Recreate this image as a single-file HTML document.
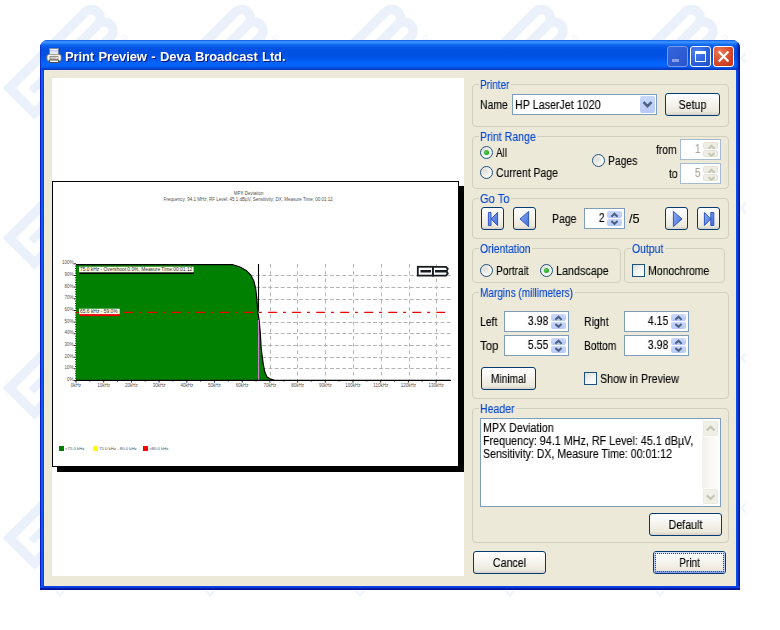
<!DOCTYPE html>
<html><head><meta charset="utf-8"><title>Print Preview - Deva Broadcast Ltd.</title>
<style>
html,body{margin:0;padding:0;background:#fff;}
body{width:780px;height:630px;position:relative;overflow:hidden;font-family:"Liberation Sans",sans-serif;font-size:11px;color:#000;}
#win *,#bg *{position:absolute;box-sizing:border-box;}
#bg{position:absolute;left:0;top:0;width:780px;height:630px;}
#win{position:absolute;left:40px;top:40px;width:700px;height:550px;background:#0831d9;border-radius:8px 8px 0 0;overflow:hidden;}
#pg{left:-40px;top:-40px;width:780px;height:630px;}
#tbar{left:0;top:0;width:700px;height:30px;background:linear-gradient(180deg,#0a4fdc 0%,#2f86fb 4%,#3a90ff 8%,#1f76f8 13%,#0a62ee 18%,#0356e6 25%,#0050e0 35%,#0052e4 56%,#0058ee 64%,#0463fa 74%,#0566fb 84%,#0458ea 91%,#0244d2 95%,#0036c0 100%);}
#frame{left:0;top:30px;width:700px;height:520px;background:linear-gradient(90deg,#0019cf 0,#0019cf 1px,#1a62f0 1px,#0f52e8 3px,#0a44de 3px,#0a44de 4px,#0a4be6 696px,#0a4be6 698px,#0a2cc0 698.5px,#0019a8 699px,#0019a8 700px);}
#fbot{left:0;top:546px;width:700px;height:4px;background:linear-gradient(180deg,#0c46e6 0,#0a3cdc 2px,#001aa8 2.5px,#00138c 4px);}
#client{left:4px;top:30px;width:692px;height:516px;background:#ece9d8;}
#ttext{left:65px;top:49px;word-spacing:1px;letter-spacing:-0.12px;font-weight:bold;font-size:13px;color:#fff;white-space:nowrap;text-shadow:1px 1px 0 #0a1883;line-height:16px;}
.t,.gl,.bt,#ttext{will-change:transform;}
.t,.gl,.bt{-webkit-text-stroke:0.12px currentColor;}
.t{white-space:nowrap;line-height:13px;height:13px;font-size:12px;transform-origin:0 0;}
.grp{border:1px solid #d0d0bf;border-radius:4px;}
.gl{color:#0046d5;white-space:nowrap;line-height:13px;height:13px;font-size:12px;transform-origin:0 0;}
.glb{background:#ece9d8;}
.bt{left:0;top:1px;width:100%;height:100%;font-size:12px;text-align:center;line-height:21px;white-space:nowrap;transform-origin:50% 0;}
.btn{border:1px solid #003c74;border-radius:3px;background:linear-gradient(180deg,#ffffff 0%,#f6f5f0 40%,#ece9dd 85%,#d6d0c5 100%);text-align:center;line-height:21px;white-space:nowrap;}
.ring1{border:1px solid #b9cdf6;border-top-color:#cfe0fc;border-bottom-color:#7f9ee9;border-radius:2px;}
.ring2{border:1px solid #c3d4f8;border-top-color:#dbe7fd;border-bottom-color:#9bb5f0;}
.focus{border:1px dotted #5e4420;}
.edit{background:#fff;border:1px solid #7f9db9;}
.radio{width:13px;height:13px;border-radius:50%;border:1px solid #1c5180;background:radial-gradient(circle at 35% 35%,#dcdcd7 0%,#f3f3ef 50%,#ffffff 100%);}
.radio.on::after{content:"";position:absolute;left:3px;top:3px;width:5px;height:5px;border-radius:50%;background:radial-gradient(circle at 40% 40%,#55d551,#21a121 70%);}
.chk{width:13px;height:13px;border:1px solid #1c5180;background:linear-gradient(135deg,#dcdcd7 0%,#f3f3ef 50%,#ffffff 100%);}
.sb{width:15px;height:7px;background:linear-gradient(180deg,#c9d8fc,#b7c9f7);border-radius:2px;}
.sb.dis{background:#f0eee4;border:1px solid #e4e2d6}
.sb svg{left:0;top:0}
.cbtn{background:linear-gradient(180deg,#c9d8fc,#b7c9f7);border-radius:2px;}
.sbar{background:linear-gradient(90deg,#f3f1ec,#fefefb);}
.sbtn{background:#f1f0e8;border:1px solid #fdfdfa;border-radius:3px;box-shadow:inset 0 0 0 1px #eceade;}
.tb{width:21px;height:21px;border:1px solid #fff;border-radius:3px;}
.tmin{background:linear-gradient(135deg,#3565da,#2a55cf);border-color:#7c9be6;}
.tmax{background:radial-gradient(circle at 30% 25%,#4f82f0 0%,#2c5fdc 60%,#1f4cc8 100%);}
.tcls{background:radial-gradient(circle at 30% 25%,#ea7a55 0%,#d9482a 55%,#bf3417 100%);}

</style></head><body>
<svg width="0" height="0" style="position:absolute"><defs>
<linearGradient id="ng" x1="0" y1="0" x2="1" y2="1"><stop offset="0" stop-color="#8fb0f2"/><stop offset="1" stop-color="#3f6ad6"/></linearGradient>
</defs></svg>
<div id="bg">
<svg width="780" height="630" viewBox="0 0 780 630" style="left:0;top:0">
<defs><pattern id="wm" width="150" height="150" patternUnits="userSpaceOnUse">
<g transform="translate(2.700 88) rotate(-45)" fill="none" stroke="#ebf1fb" stroke-width="9.500" stroke-linejoin="miter">
<rect x="4.750" y="4.750" width="50" height="35.500"/>
<path d="M18 22.500H42" stroke-width="8"/>
<path d="M54.750 4.750H112a8.875 8.875 0 0 1 0 17.750a8.875 8.875 0 0 1 0 17.750H54.750"/>
<path d="M59 22.500H112"/>
<circle cx="122" cy="51" r="2.500" stroke-width="0.800"/>
</g>
<path d="M56 141L60 145.500L64 141M145.500 53.500L141.500 58L145.500 62.500" fill="none" stroke="#eef3fc" stroke-width="2.200"/>
</pattern></defs>
<rect x="0" y="0" width="750" height="600" fill="url(#wm)"/>
</svg>

</div>
<div id="win">
 <div id="tbar"><div style="right:0;top:3px;width:5px;height:27px;background:linear-gradient(90deg,rgba(0,25,168,0) 0,rgba(0,30,180,0.45) 55%,rgba(0,22,160,0.95) 75%,#0019a8 100%)"></div><div style="left:0;top:3px;width:1px;height:27px;background:#0a32d4"></div></div>
 <div id="frame"></div>
 <div id="fbot"></div>
 <div id="client"></div>
 <div id="pg">
<svg width="17" height="16" viewBox="0 0 17 16" style="left:46px;top:47px">
<defs><linearGradient id="pp" x1="0" y1="0" x2="0" y2="1"><stop offset="0" stop-color="#ffffff"/><stop offset="0.12" stop-color="#f4f6fd"/><stop offset="0.3" stop-color="#c1cff6"/><stop offset="0.5" stop-color="#dfe5f8"/><stop offset="0.7" stop-color="#ffffff"/><stop offset="1" stop-color="#ffffff"/></linearGradient>
<linearGradient id="pb" x1="0" y1="0" x2="1" y2="0"><stop offset="0" stop-color="#a9a79d"/><stop offset="0.14" stop-color="#fbfbf8"/><stop offset="0.5" stop-color="#e6e4dc"/><stop offset="0.86" stop-color="#fbfbf8"/><stop offset="1" stop-color="#9b998f"/></linearGradient></defs>
<rect x="3.500" y="1.400" width="9" height="7.600" fill="url(#pp)" stroke="#74778a" stroke-width="0.700"/>
<rect x="0.600" y="7.300" width="15" height="6.700" rx="2.600" fill="url(#pb)" stroke="#6b695f" stroke-width="0.700"/>
<rect x="4" y="9.600" width="8" height="2.600" fill="#cfcdc3" stroke="#6a685f" stroke-width="0.600"/>
<rect x="3.500" y="13" width="9" height="2.500" fill="#fdfdfb" stroke="#3c3a34" stroke-width="0.800"/>
<rect x="10.400" y="10.300" width="1.300" height="1.200" fill="#fff"/>
</svg>
<div id="ttext">Print Preview - Deva Broadcast Ltd.</div>
<div class="tb tmin" style="left:667px;top:46px"><div style="left:4px;top:12px;width:7px;height:3px;background:#869fe6"></div></div>
<div class="tb tmax" style="left:690px;top:46px"><div style="left:4px;top:4px;width:11px;height:11px;border:1px solid #fff;border-top-width:3px"></div></div>
<div class="tb tcls" style="left:713px;top:46px"><svg width="19" height="19" viewBox="0 0 19 19" style="left:0;top:0"><path d="M4.800 4.600L14.400 14.400M14.400 4.600L4.800 14.400" stroke="#fff" stroke-width="2.200" fill="none"/></svg></div>

<div style="left:52px;top:78px;width:412px;height:498px;background:#fff"></div>
<div style="left:57px;top:186px;width:407px;height:286px;background:#000"></div>
<div style="left:52px;top:181px;width:407px;height:286px;background:#fff;border:1px solid #000"></div>
<svg width="407" height="286" viewBox="52 181 407 286" style="left:52px;top:181px" font-family="Liberation Sans, sans-serif" shape-rendering="auto">
<text x="248.6" y="195" font-size="4.5" text-anchor="middle" fill="#505050">MPX Deviation</text>
<text x="248.2" y="200.7" font-size="4.5" text-anchor="middle" fill="#505050">Frequency: 94.1 MHz, RF Level: 45.1 dBµV, Sensitivity: DX, Measure Time: 00:01:12</text>
<path d="M270.5 264V380 M297.5 264V380 M325.5 264V380 M353.5 264V380 M381.5 264V380 M409.5 264V380 M436.5 264V380" fill="none" stroke="#b4b4b4" stroke-width="1" stroke-dasharray="3.5 3.7"/>
<path d="M77.800 275.5H451 M77.800 287.5H451 M77.800 299.5H451 M77.800 322.5H451 M77.800 333.5H451 M77.800 345.5H451 M77.800 357.5H451 M77.800 368.5H451" fill="none" stroke="#b4b4b4" stroke-width="1" stroke-dasharray="3.9 2.25"/>
<path d="M76 264.5 L232.3 264.5 L240 267 L246.2 270.4 L250.8 275 L253.8 281 L255.7 288.8 L256.9 299.6 L257.7 311 L259.2 320.8 L260.3 333 L261.2 348.5 L263 362.3 L264.6 371.5 L267 377 L270.8 379.2 L274.5 380.3 L76 380.3Z" fill="#008000"/>
<path d="M76 264.7 L232.3 264.5 L240 267 L246.2 270.4 L250.8 275 L253.8 281 L255.7 288.8 L256.9 299.6 L257.7 311 L259.2 320.8 L260.3 333 L261.2 348.5 L263 362.3 L264.6 371.5 L267 377 L270.8 379.2 L274.5 380.3" fill="none" stroke="#000" stroke-width="1.2"/>
<path d="M258.5 264V311.5" stroke="#000" stroke-width="1.1"/>
<path d="M258.6 320V380" stroke="#e080e0" stroke-width="1"/>
<path d="M75.5 380.3H451" stroke="#000" stroke-width="1.2"/>
<path d="M73.6 380.5H76 M75 378.2H76 M75 375.8H76 M75 373.5H76 M75 371.2H76 M73.6 368.8H76 M75 366.5H76 M75 364.2H76 M75 361.8H76 M75 359.5H76 M73.6 357.2H76 M75 354.8H76 M75 352.5H76 M75 350.2H76 M75 347.8H76 M73.6 345.5H76 M75 343.2H76 M75 340.8H76 M75 338.5H76 M75 336.2H76 M73.6 333.8H76 M75 331.5H76 M75 329.2H76 M75 326.8H76 M75 324.5H76 M73.6 322.1H76 M75 319.8H76 M75 317.5H76 M75 315.1H76 M75 312.8H76 M73.6 310.5H76 M75 308.1H76 M75 305.8H76 M75 303.5H76 M75 301.1H76 M73.6 298.8H76 M75 296.5H76 M75 294.1H76 M75 291.8H76 M75 289.5H76 M73.6 287.1H76 M75 284.8H76 M75 282.5H76 M75 280.1H76 M75 277.8H76 M73.6 275.5H76 M75 273.1H76 M75 270.8H76 M75 268.5H76 M75 266.1H76 M73.6 263.8H76 M76.0 380V382.6 M89.8 380V381.6 M103.7 380V382.6 M117.5 380V381.6 M131.4 380V382.6 M145.2 380V381.6 M159.1 380V382.6 M172.9 380V381.6 M186.8 380V382.6 M200.6 380V381.6 M214.5 380V382.6 M228.3 380V381.6 M242.2 380V382.6 M256.0 380V381.6 M269.9 380V382.6 M283.8 380V381.6 M297.6 380V382.6 M311.4 380V381.6 M325.3 380V382.6 M339.1 380V381.6 M353.0 380V382.6 M366.8 380V381.6 M380.7 380V382.6 M394.6 380V381.6 M408.4 380V382.6 M422.2 380V381.6 M436.1 380V382.6" stroke="#000" stroke-width="0.85" fill="none"/>
<text x="73.6" y="380.9" font-size="4.5" text-anchor="end" fill="#505050">0%</text>
<text x="73.6" y="369.2" font-size="4.5" text-anchor="end" fill="#505050">10%</text>
<text x="73.6" y="357.6" font-size="4.5" text-anchor="end" fill="#505050">20%</text>
<text x="73.6" y="345.9" font-size="4.5" text-anchor="end" fill="#505050">30%</text>
<text x="73.6" y="334.2" font-size="4.5" text-anchor="end" fill="#505050">40%</text>
<text x="73.6" y="322.5" font-size="4.5" text-anchor="end" fill="#505050">50%</text>
<text x="73.6" y="310.9" font-size="4.5" text-anchor="end" fill="#505050">60%</text>
<text x="73.6" y="299.2" font-size="4.5" text-anchor="end" fill="#505050">70%</text>
<text x="73.6" y="287.5" font-size="4.5" text-anchor="end" fill="#505050">80%</text>
<text x="73.6" y="275.9" font-size="4.5" text-anchor="end" fill="#505050">90%</text>
<text x="73.6" y="264.2" font-size="4.5" text-anchor="end" fill="#505050">100%</text>
<text x="76.0" y="387.1" font-size="4.5" text-anchor="middle" fill="#505050">0kHz</text>
<text x="103.7" y="387.1" font-size="4.5" text-anchor="middle" fill="#505050">10kHz</text>
<text x="131.4" y="387.1" font-size="4.5" text-anchor="middle" fill="#505050">20kHz</text>
<text x="159.1" y="387.1" font-size="4.5" text-anchor="middle" fill="#505050">30kHz</text>
<text x="186.8" y="387.1" font-size="4.5" text-anchor="middle" fill="#505050">40kHz</text>
<text x="214.5" y="387.1" font-size="4.5" text-anchor="middle" fill="#505050">50kHz</text>
<text x="242.2" y="387.1" font-size="4.5" text-anchor="middle" fill="#505050">60kHz</text>
<text x="269.9" y="387.1" font-size="4.5" text-anchor="middle" fill="#505050">70kHz</text>
<text x="297.6" y="387.1" font-size="4.5" text-anchor="middle" fill="#505050">80kHz</text>
<text x="325.3" y="387.1" font-size="4.5" text-anchor="middle" fill="#505050">90kHz</text>
<text x="353.0" y="387.1" font-size="4.5" text-anchor="middle" fill="#505050">100kHz</text>
<text x="380.7" y="387.1" font-size="4.5" text-anchor="middle" fill="#505050">110kHz</text>
<text x="408.4" y="387.1" font-size="4.5" text-anchor="middle" fill="#505050">120kHz</text>
<text x="436.1" y="387.1" font-size="4.5" text-anchor="middle" fill="#505050">130kHz</text>
<path d="M75.900 312.400H445" stroke="#f00000" stroke-width="1.25" stroke-dasharray="8.8 6.1 2.8 6.33" fill="none"/>
<rect x="79.3" y="272.1" width="114.6" height="2" fill="#000"/>
<rect x="79" y="266.7" width="114.6" height="5.6" fill="#ffffe8"/>
<text x="80" y="271.2" font-size="4.9" fill="#282828" textLength="112.3" lengthAdjust="spacingAndGlyphs">75.0 kHz - Overshoot:0.0%, Measure Time:00:01:12</text>
<rect x="79.3" y="313.9" width="40.7" height="2.2" fill="#f00000"/>
<rect x="79" y="308.7" width="40.7" height="5.4" fill="#ffffe8"/>
<text x="80" y="313.1" font-size="4.9" fill="#282828" textLength="37.6" lengthAdjust="spacingAndGlyphs">65.6 kHz - 59.0%</text>
<g fill="#fff" stroke="#181c20" stroke-width="1.8"><rect x="417.800" y="266.800" width="15.200" height="8.800"/><path d="M433 266.800H446l1.800 2.100l-1.300 2.300l1.300 2.300l-1.800 2.100H433Z"/><path d="M420.500 271.300H431M435 271.300H446.500" stroke-width="2.400" fill="none"/></g>
<rect x="59" y="446" width="5" height="5" fill="#008000"/>
<rect x="93" y="446" width="5" height="5" fill="#ffff00"/>
<rect x="143" y="446" width="5" height="5" fill="#ff0000"/>
<text x="65" y="450.2" font-size="4.3" fill="#505050">&lt;75.0 kHz</text>
<text x="99" y="450.2" font-size="4.3" fill="#505050">75.0 kHz - 80.0 kHz</text>
<text x="149" y="450.2" font-size="4.3" fill="#505050">&gt;80.0 kHz</text>
</svg>
<div class="grp" style="left:472px;top:84px;width:257px;height:43px"></div>
<div class="glb" style="left:479px;top:84px;width:32px;height:1px"></div>
<div class="gl" style="left:480px;top:79px;transform:scaleX(0.8318)">Printer</div>
<div class="t" style="left:480px;top:99px;transform:scaleX(0.8683);">Name</div>
<div class="edit" style="left:512px;top:94px;width:145px;height:21px"></div>
<div class="t" style="left:515px;top:99px;transform:scaleX(0.8931);">HP LaserJet 1020</div>
<div class="cbtn" style="left:640px;top:96px;width:15px;height:17px"><svg width="15" height="17" viewBox="0 0 15 17" style="left:0;top:0"><path d="M3.500 6.200L7.500 10.200L11.500 6.200" fill="none" stroke="#4d6185" stroke-width="2.600"/></svg></div>
<div class="btn" style="left:665px;top:93px;width:55px;height:23px;"><div class="bt" style="transform:scaleX(0.8865)">Setup</div></div>
<div class="grp" style="left:472px;top:136px;width:257px;height:53px"></div>
<div class="glb" style="left:479px;top:136px;width:58px;height:1px"></div>
<div class="gl" style="left:480px;top:131px;transform:scaleX(0.8805)">Print Range</div>
<div class="radio on" style="left:480px;top:146px"></div>
<div class="t" style="left:496px;top:147px;transform:scaleX(0.8169);">All</div>
<div class="radio" style="left:480px;top:166px"></div>
<div class="t" style="left:496px;top:167px;transform:scaleX(0.8673);">Current Page</div>
<div class="radio" style="left:592px;top:154px"></div>
<div class="t" style="left:608px;top:155px;transform:scaleX(0.8639);">Pages</div>
<div class="t" style="left:656px;top:144px;transform:scaleX(0.8583);">from</div>
<div class="t" style="left:668.5px;top:168px;transform:scaleX(0.8587);">to</div>
<div class="edit" style="left:680px;top:139px;width:41px;height:21px;border-color:#a5b9cf;"></div>
<div class="t" style="right:79.3px;top:143px;transform:scaleX(0.88);transform-origin:100% 0;color:#aca899">1</div>
<div class="sb dis" style="left:703px;top:142px"><svg class="ar" width="15" height="7" viewBox="0 0 15 7"><path d="M4.400 5.700L7.500 2.800L10.600 5.700" fill="none" stroke="#c9c7ba" stroke-width="2.100"/></svg></div>
<div class="sb dis" style="left:703px;top:150px"><svg class="ar" width="15" height="7" viewBox="0 0 15 7"><path d="M4.400 1.900L7.500 4.800L10.600 1.900" fill="none" stroke="#c9c7ba" stroke-width="2.100"/></svg></div>
<div class="edit" style="left:680px;top:163px;width:41px;height:21px;border-color:#a5b9cf;"></div>
<div class="t" style="right:79.3px;top:167px;transform:scaleX(0.88);transform-origin:100% 0;color:#aca899">5</div>
<div class="sb dis" style="left:703px;top:166px"><svg class="ar" width="15" height="7" viewBox="0 0 15 7"><path d="M4.400 5.700L7.500 2.800L10.600 5.700" fill="none" stroke="#c9c7ba" stroke-width="2.100"/></svg></div>
<div class="sb dis" style="left:703px;top:174px"><svg class="ar" width="15" height="7" viewBox="0 0 15 7"><path d="M4.400 1.900L7.500 4.800L10.600 1.900" fill="none" stroke="#c9c7ba" stroke-width="2.100"/></svg></div>
<div class="grp" style="left:472px;top:198px;width:257px;height:41px"></div>
<div class="glb" style="left:479px;top:198px;width:32px;height:1px"></div>
<div class="gl" style="left:480px;top:193px;transform:scaleX(0.9242)">Go To</div>
<div class="btn" style="left:481px;top:207px;width:23px;height:23px;"><svg width="21" height="21" viewBox="0 0 21 21" style="left:0;top:0"><path d="M6.400 4.500H9V17.500H6.400Z M15.600 4.500V17.500L9 11Z" fill="url(#ng)" stroke="#2f55c4" stroke-width="1"/></svg></div>
<div class="btn" style="left:513px;top:207px;width:23px;height:23px;"><svg width="21" height="21" viewBox="0 0 21 21" style="left:0;top:0"><path d="M14.600 3.400V18.600L6 11Z" fill="url(#ng)" stroke="#2f55c4" stroke-width="1"/></svg></div>
<div class="t" style="left:552px;top:213px;transform:scaleX(0.874);">Page</div>
<div class="edit" style="left:584px;top:208px;width:41px;height:21px;"></div>
<div class="t" style="right:175.3px;top:212px;transform:scaleX(0.88);transform-origin:100% 0;color:#000">2</div>
<div class="sb" style="left:607px;top:211px"><svg class="ar" width="15" height="7" viewBox="0 0 15 7"><path d="M4.400 5.700L7.500 2.800L10.600 5.700" fill="none" stroke="#4d6185" stroke-width="2.100"/></svg></div>
<div class="sb" style="left:607px;top:219px"><svg class="ar" width="15" height="7" viewBox="0 0 15 7"><path d="M4.400 1.900L7.500 4.800L10.600 1.900" fill="none" stroke="#4d6185" stroke-width="2.100"/></svg></div>
<div class="t" style="left:629px;top:213px;transform:scaleX(1.0583);">/5</div>
<div class="btn" style="left:665px;top:207px;width:23px;height:23px;"><svg width="21" height="21" viewBox="0 0 21 21" style="left:0;top:0"><path d="M7.400 3.400V18.600L16 11Z" fill="url(#ng)" stroke="#2f55c4" stroke-width="1"/></svg></div>
<div class="btn" style="left:697px;top:207px;width:23px;height:23px;"><svg width="21" height="21" viewBox="0 0 21 21" style="left:0;top:0"><path d="M15.800 4.500H12.800V17.500H15.800Z M6.400 4.500V17.500L12.800 11Z" fill="url(#ng)" stroke="#2f55c4" stroke-width="1"/></svg></div>
<div class="grp" style="left:472px;top:248px;width:149px;height:35px"></div>
<div class="glb" style="left:479px;top:248px;width:53px;height:1px"></div>
<div class="gl" style="left:480px;top:243px;transform:scaleX(0.8603)">Orientation</div>
<div class="radio" style="left:480px;top:264px"></div>
<div class="t" style="left:496px;top:265px;transform:scaleX(0.8452);">Portrait</div>
<div class="radio on" style="left:540px;top:264px"></div>
<div class="t" style="left:556px;top:265px;transform:scaleX(0.8975);">Landscape</div>
<div class="grp" style="left:624px;top:248px;width:101px;height:35px"></div>
<div class="glb" style="left:631px;top:248px;width:34px;height:1px"></div>
<div class="gl" style="left:632px;top:243px;transform:scaleX(0.8687)">Output</div>
<div class="chk" style="left:632px;top:264px"></div>
<div class="t" style="left:648px;top:265px;transform:scaleX(0.8768);">Monochrome</div>
<div class="grp" style="left:472px;top:292px;width:257px;height:107px"></div>
<div class="glb" style="left:479px;top:292px;width:96px;height:1px"></div>
<div class="gl" style="left:480px;top:287px;transform:scaleX(0.8353)">Margins (millimeters)</div>
<div class="t" style="left:480px;top:316px;transform:scaleX(0.8643);">Left</div>
<div class="edit" style="left:504px;top:311px;width:65px;height:21px;"></div>
<div class="t" style="right:232px;top:315px;transform:scaleX(0.88);transform-origin:100% 0;color:#000">3.98</div>
<div class="sb" style="left:551px;top:314px"><svg class="ar" width="15" height="7" viewBox="0 0 15 7"><path d="M4.400 5.700L7.500 2.800L10.600 5.700" fill="none" stroke="#4d6185" stroke-width="2.100"/></svg></div>
<div class="sb" style="left:551px;top:322px"><svg class="ar" width="15" height="7" viewBox="0 0 15 7"><path d="M4.400 1.900L7.500 4.800L10.600 1.900" fill="none" stroke="#4d6185" stroke-width="2.100"/></svg></div>
<div class="t" style="left:480px;top:340px;transform:scaleX(0.9504);">Top</div>
<div class="edit" style="left:504px;top:335px;width:65px;height:21px;"></div>
<div class="t" style="right:232px;top:339px;transform:scaleX(0.88);transform-origin:100% 0;color:#000">5.55</div>
<div class="sb" style="left:551px;top:338px"><svg class="ar" width="15" height="7" viewBox="0 0 15 7"><path d="M4.400 5.700L7.500 2.800L10.600 5.700" fill="none" stroke="#4d6185" stroke-width="2.100"/></svg></div>
<div class="sb" style="left:551px;top:346px"><svg class="ar" width="15" height="7" viewBox="0 0 15 7"><path d="M4.400 1.900L7.500 4.800L10.600 1.900" fill="none" stroke="#4d6185" stroke-width="2.100"/></svg></div>
<div class="t" style="left:584px;top:316px;transform:scaleX(0.8781);">Right</div>
<div class="edit" style="left:624px;top:311px;width:65px;height:21px;"></div>
<div class="t" style="right:112px;top:315px;transform:scaleX(0.88);transform-origin:100% 0;color:#000">4.15</div>
<div class="sb" style="left:671px;top:314px"><svg class="ar" width="15" height="7" viewBox="0 0 15 7"><path d="M4.400 5.700L7.500 2.800L10.600 5.700" fill="none" stroke="#4d6185" stroke-width="2.100"/></svg></div>
<div class="sb" style="left:671px;top:322px"><svg class="ar" width="15" height="7" viewBox="0 0 15 7"><path d="M4.400 1.900L7.500 4.800L10.600 1.900" fill="none" stroke="#4d6185" stroke-width="2.100"/></svg></div>
<div class="t" style="left:584px;top:340px;transform:scaleX(0.8497);">Bottom</div>
<div class="edit" style="left:624px;top:335px;width:65px;height:21px;"></div>
<div class="t" style="right:112px;top:339px;transform:scaleX(0.88);transform-origin:100% 0;color:#000">3.98</div>
<div class="sb" style="left:671px;top:338px"><svg class="ar" width="15" height="7" viewBox="0 0 15 7"><path d="M4.400 5.700L7.500 2.800L10.600 5.700" fill="none" stroke="#4d6185" stroke-width="2.100"/></svg></div>
<div class="sb" style="left:671px;top:346px"><svg class="ar" width="15" height="7" viewBox="0 0 15 7"><path d="M4.400 1.900L7.500 4.800L10.600 1.900" fill="none" stroke="#4d6185" stroke-width="2.100"/></svg></div>
<div class="btn" style="left:481px;top:367px;width:55px;height:23px;"><div class="bt" style="transform:scaleX(0.8466)">Minimal</div></div>
<div class="chk" style="left:584px;top:372px"></div>
<div class="t" style="left:600px;top:373px;transform:scaleX(0.8905);">Show in Preview</div>
<div class="grp" style="left:472px;top:408px;width:257px;height:135px"></div>
<div class="glb" style="left:479px;top:408px;width:37px;height:1px"></div>
<div class="gl" style="left:480px;top:403px;transform:scaleX(0.8791)">Header</div>
<div class="edit" style="left:480px;top:418px;width:241px;height:89px"></div>
<div class="t" style="left:483px;top:422px;transform:scaleX(0.8907);">MPX Deviation</div>
<div class="t" style="left:483px;top:435px;transform:scaleX(0.8964);">Frequency: 94.1 MHz, RF Level: 45.1 dBµV,</div>
<div class="t" style="left:483px;top:448px;transform:scaleX(0.8855);">Sensitivity: DX, Measure Time: 00:01:12</div>
<div class="sbar" style="left:702px;top:420px;width:17px;height:85px"></div>
<div class="sbtn" style="left:702px;top:420px;width:17px;height:17px"><svg width="17" height="17" viewBox="0 0 17 17" style="left:0;top:0"><path d="M3.800 9.500L7.600 5.700L11.400 9.500" fill="none" stroke="#c6c4b7" stroke-width="2.200"/></svg></div>
<div class="sbtn" style="left:702px;top:488px;width:17px;height:17px"><svg width="17" height="17" viewBox="0 0 17 17" style="left:0;top:0"><path d="M3.800 6.200L7.600 10L11.400 6.200" fill="none" stroke="#c6c4b7" stroke-width="2.200"/></svg></div>
<div class="btn" style="left:649px;top:513px;width:73px;height:23px;"><div class="bt" style="transform:scaleX(0.8914)">Default</div></div>
<div class="btn" style="left:473px;top:551px;width:73px;height:23px;"><div class="bt" style="transform:scaleX(0.8887)">Cancel</div></div>
<div class="btn def" style="left:653px;top:551px;width:73px;height:23px;"><div class="bt" style="transform:scaleX(0.8425)">Print</div></div>
<div class="ring1" style="left:654px;top:552px;width:71px;height:21px"></div>
<div class="ring2" style="left:655px;top:553px;width:69px;height:19px"></div>
<div class="focus" style="left:655px;top:553px;width:69px;height:19px"></div>
 </div>
</div>
</body></html>
